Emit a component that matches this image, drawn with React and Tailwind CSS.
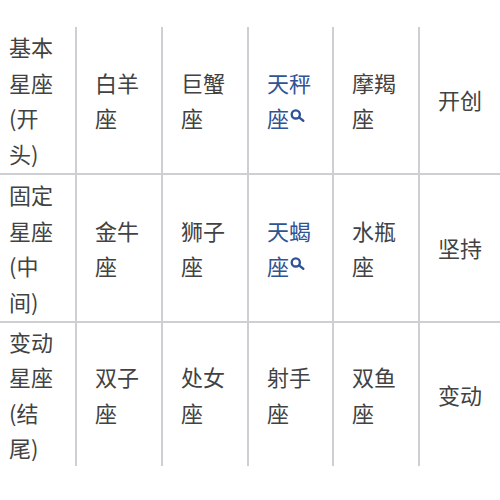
import React from "react";

const rows = [
  { head: "基本星座(开头)", signs: ["白羊座", "巨蟹座", { link: "天秤座" }, "摩羯座"], mode: "开创" },
  { head: "固定星座(中间)", signs: ["金牛座", "狮子座", { link: "天蝎座" }, "水瓶座"], mode: "坚持" },
  { head: "变动星座(结尾)", signs: ["双子座", "处女座", "射手座", "双鱼座"], mode: "变动" },
];

const SearchIcon = () => (
  <svg viewBox="0 0 14 12" className="inline-block w-[15px] h-[13px] align-[5px] ml-[1px]" fill="none" stroke="currentColor" strokeWidth="2.2" strokeLinecap="round">
    <circle cx="5.4" cy="5" r="3.8" />
    <line x1="8.4" y1="7.8" x2="12.4" y2="10.9" />
  </svg>
);

const Cell = ({ children, first }) => (
  <div className={`bg-white flex items-center ${first ? "pl-[9px]" : "pl-[18px]"}`}>
    <div className="max-w-[50px]">{children}</div>
  </div>
);

export default function App() {
  return (
    <div
      className="w-[500px] h-[500px] bg-white overflow-hidden text-[22px] leading-[35.5px] text-[#424242]"
      style={{ fontFamily: '"Noto Sans CJK SC", "Noto Sans", sans-serif' }}
    >
      <div className="mt-[27px] grid grid-cols-[75px_84px_84px_83px_84px_80px] grid-rows-[146px_146px_143px] gap-[2px] bg-[#cdcfd3]">
        {rows.map((row, i) => (
          <React.Fragment key={i}>
            <Cell first>{row.head}</Cell>
            {row.signs.map((s, j) =>
              typeof s === "string" ? (
                <Cell key={j}>{s}</Cell>
              ) : (
                <Cell key={j}>
                  <span className="text-[#2f5496]">
                    {s.link}
                    <SearchIcon />
                  </span>
                </Cell>
              )
            )}
            <div className="bg-white flex items-center pl-[18px]">{row.mode}</div>
          </React.Fragment>
        ))}
      </div>
    </div>
  );
}
